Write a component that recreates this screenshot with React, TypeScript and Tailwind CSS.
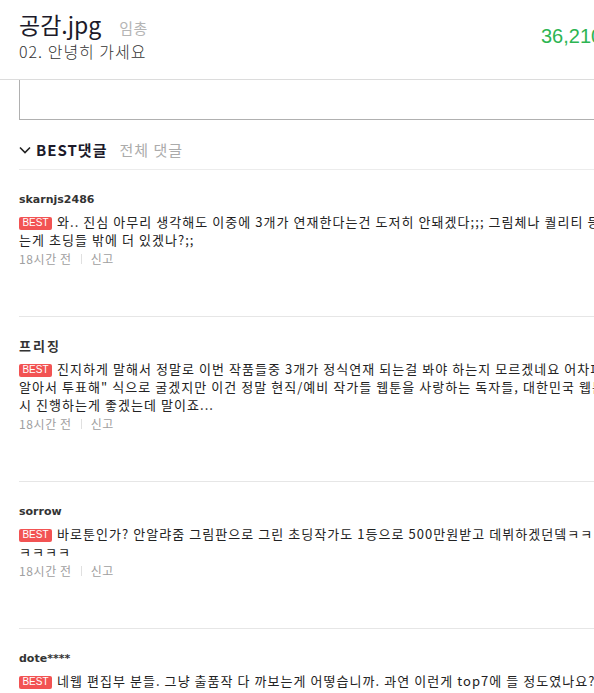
import React from 'react';

type Comment = {
  user: string;
  lines: string[];
  time: string;
};

const comments: Comment[] = [
  {
    user: 'skarnjs2486',
    lines: [
      '와.. 진심 아무리 생각해도 이중에 3개가 연재한다는건 도저히 안돼겠다;;; 그림체나 퀄리티 등등 보면 이걸 뽑',
      '는게 초딩들 밖에 더 있겠나?;;',
    ],
    time: '18시간 전',
  },
  {
    user: '프리징',
    lines: [
      '진지하게 말해서 정말로 이번 작품들중 3개가 정식연재 되는걸 봐야 하는지 모르겠네요 어차피 "너희가',
      '알아서 투표해" 식으로 굴겠지만 이건 정말 현직/예비 작가들 웹툰을 사랑하는 독자들, 대한민국 웹툰을 위해서라도 다',
      '시 진행하는게 좋겠는데 말이죠...',
    ],
    time: '18시간 전',
  },
  {
    user: 'sorrow',
    lines: [
      '바로툰인가? 안알랴줌 그림판으로 그린 초딩작가도 1등으로 500만원받고 데뷔하겠던뎈ㅋㅋㅋㅋㅋㅋ',
      'ㅋㅋㅋㅋ',
    ],
    time: '18시간 전',
  },
  {
    user: 'dote****',
    lines: ['네웹 편집부 분들. 그냥 출품작 다 까보는게 어떻습니까. 과연 이런게 top7에 들 정도였나요?'],
    time: '18시간 전',
  },
];

const bodyFont = { fontFamily: '"Noto Sans CJK KR", "Noto Sans", sans-serif' };
const userFont = { fontFamily: '"DejaVu Sans", "Noto Sans CJK KR", sans-serif' };

function BestBadge() {
  return (
    <span
      className="inline-flex items-center justify-center w-[33px] h-[13px] mr-[5px] bg-[#f25353] text-white text-[10px] leading-none tracking-normal rounded-[2px] align-[1px]"
      style={{ fontFamily: '"Liberation Sans", sans-serif' }}
    >
      BEST
    </span>
  );
}

function CommentItem({ comment, last }: { comment: Comment; last: boolean }) {
  const hangulName = /[가-힣]/.test(comment.user);
  return (
    <div className={`pt-[21px] pb-[48px] ${last ? '' : 'border-b border-[#e6e6e6]'}`}>
      <div
        className={`leading-[18px] font-bold text-[#333] mb-[4px] ${
          hangulName ? 'text-[13px] tracking-[2px]' : 'text-[11px]'
        }`}
        style={userFont}
      >
        {comment.user}
      </div>
      {comment.lines.map((line, i) => (
        <div
          key={i}
          className="text-[13px] leading-[18px] text-[#222] whitespace-nowrap tracking-[1.05px]"
          style={bodyFont}
        >
          {i === 0 && <BestBadge />}
          {line}
        </div>
      ))}
      <div className="mt-[1px] flex items-center text-[12px] leading-[18px] text-[#a0a0a0] tracking-[0.6px]" style={bodyFont}>
        <span>{comment.time}</span>
        <span className="mx-[9px] w-px h-[10px] bg-[#e0e0e0]" />
        <span>신고</span>
      </div>
    </div>
  );
}

export default function App() {
  return (
    <div className="w-[594px] h-[693px] overflow-hidden bg-white">
      <div className="w-[800px]">
        {/* Header */}
        <div className="h-[80px] border-b border-[#dcdcdc] flex">
          <div className="w-[541px] pl-[19px] pt-[9px]">
            <div className="flex items-baseline">
              <span className="text-[23px] leading-[30px] text-[#1c1a2a]" style={bodyFont}>
                공감.jpg
              </span>
              <span className="ml-[18px] text-[15px] text-[#b5b5b5] tracking-[0.5px]" style={bodyFont}>
                임총
              </span>
            </div>
            <div className="text-[16px] leading-[22px] text-[#333] font-light tracking-[1px]" style={bodyFont}>
              02. 안녕히 가세요
            </div>
          </div>
          <div
            className="pt-[24px] text-[20px] leading-[24px] text-[#2cb552]"
            style={{ fontFamily: '"Liberation Sans", sans-serif' }}
          >
            36,210
          </div>
        </div>

        {/* Comment input box */}
        <div className="ml-[19px] w-[700px] h-[40px] border-l border-r border-b border-[#b0b0b0]" />

        {/* Tabs */}
        <div className="ml-[19px] mt-[20px] pb-[9px] border-b border-[#ececec] flex items-center h-[30px]">
          <svg width="12" height="8" viewBox="0 0 12 8" className="mr-[5px]">
            <polyline points="1,1.5 6,6.5 11,1.5" fill="none" stroke="#222" strokeWidth="1.6" />
          </svg>
          <span className="text-[15px] font-bold text-[#1c1a2a] tracking-[1px]" style={bodyFont}>
            BEST댓글
          </span>
          <span className="ml-[12px] text-[15px] text-[#ababab] tracking-[1px]" style={bodyFont}>
            전체 댓글
          </span>
        </div>

        {/* Comments */}
        <div className="ml-[19px]">
          {comments.map((c, i) => (
            <CommentItem key={c.user} comment={c} last={i === comments.length - 1} />
          ))}
        </div>
      </div>
    </div>
  );
}
